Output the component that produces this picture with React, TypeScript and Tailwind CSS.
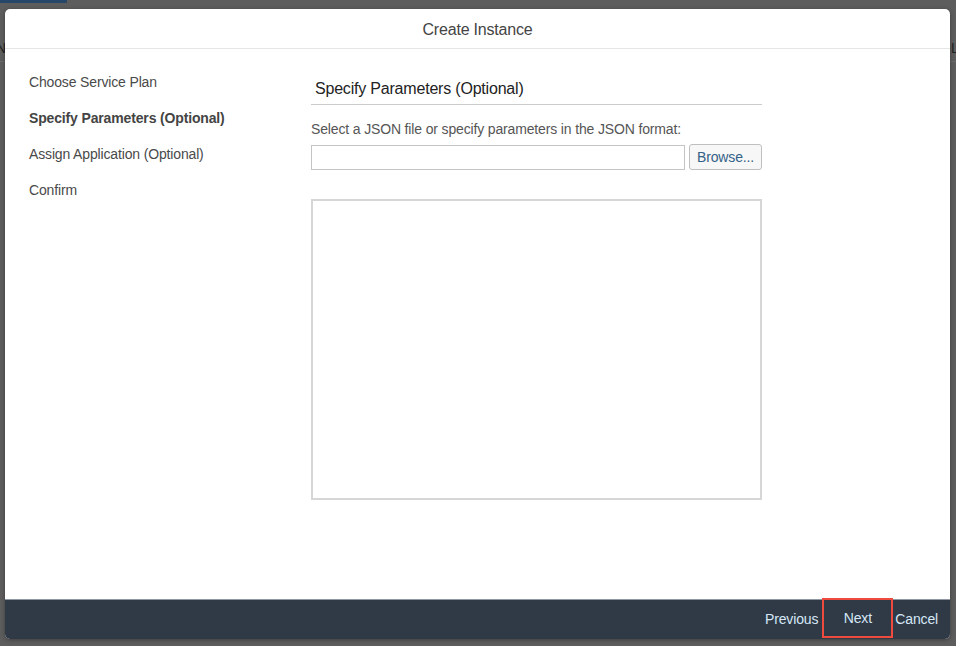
import React from "react";

export default function App() {
  const font = { fontFamily: '"Liberation Sans", Arial, sans-serif' };
  return (
    <div className="relative w-[956px] h-[646px] overflow-hidden bg-[#5d5d5d]" style={font}>
      {/* background page hints */}
      <div className="absolute left-0 top-0 w-[67px] h-[3px] bg-[#27476a]" />
      <div className="absolute left-0 top-[61px] w-[956px] h-px bg-[#6a6a6a]" />
      <div className="absolute left-[-4px] top-[38px] text-[14px] text-[#222]">N</div>
      <div className="absolute left-[951px] top-[38px] text-[14px] text-[#222]">L</div>

      {/* dialog */}
      <div className="absolute left-[5px] top-[9px] w-[945px] h-[630px] bg-white rounded-[5px] flex flex-col overflow-hidden shadow-[0_1px_4px_rgba(0,0,0,0.35)]">
        <div className="h-[40px] shrink-0 border-b border-[#e5e5e5] flex items-center justify-center pt-[2px] text-[16px] text-[#444] tracking-[-0.2px]">
          Create Instance
        </div>
        <div className="flex-1 flex">
          <div className="w-[306px] shrink-0 pl-[24px] pt-[23px] flex flex-col gap-[16px] text-[14px] leading-[20px] text-[#4a4a4a] tracking-[-0.15px]">
            <div>Choose Service Plan</div>
            <div className="font-bold text-[#444]">Specify Parameters (Optional)</div>
            <div>Assign Application (Optional)</div>
            <div>Confirm</div>
          </div>
          <div className="w-[451px] pt-[29px] flex flex-col">
            <div className="pl-[4px] pb-[4px] text-[16px] leading-[22px] text-[#222] border-b border-[#cccccc] tracking-[-0.2px]">
              Specify Parameters (Optional)
            </div>
            <div className="mt-[15px] text-[14px] leading-[18px] text-[#555] tracking-[-0.15px]">
              Select a JSON file or specify parameters in the JSON format:
            </div>
            <div className="mt-[6px] flex items-center gap-[4px]">
              <div className="w-[374px] h-[25px] border border-[#c4c4c4] bg-white" />
              <div className="w-[73px] h-[26px] rounded-[3px] border border-[#bfbfbf] bg-[#f7f7f7] flex items-center justify-center text-[14px] text-[#346187] tracking-[-0.15px]">
                Browse...
              </div>
            </div>
            <div className="mt-[29px] h-[301px] border-2 border-[#d6d6d6] bg-white" />
          </div>
        </div>
        <div className="h-[40px] shrink-0 bg-[#2f3a46] border-t border-[#8f98a2] flex items-center justify-end pr-[12px] text-[14px] text-[#d6e7f7] tracking-[-0.15px]">
          <div className="mr-[4px]">Previous</div>
          <div className="w-[71px] h-[40px] self-start -mt-[2px] border-2 border-[#ef4a3e] flex items-center justify-center">
            Next
          </div>
          <div className="ml-[2px]">Cancel</div>
        </div>
      </div>
    </div>
  );
}
